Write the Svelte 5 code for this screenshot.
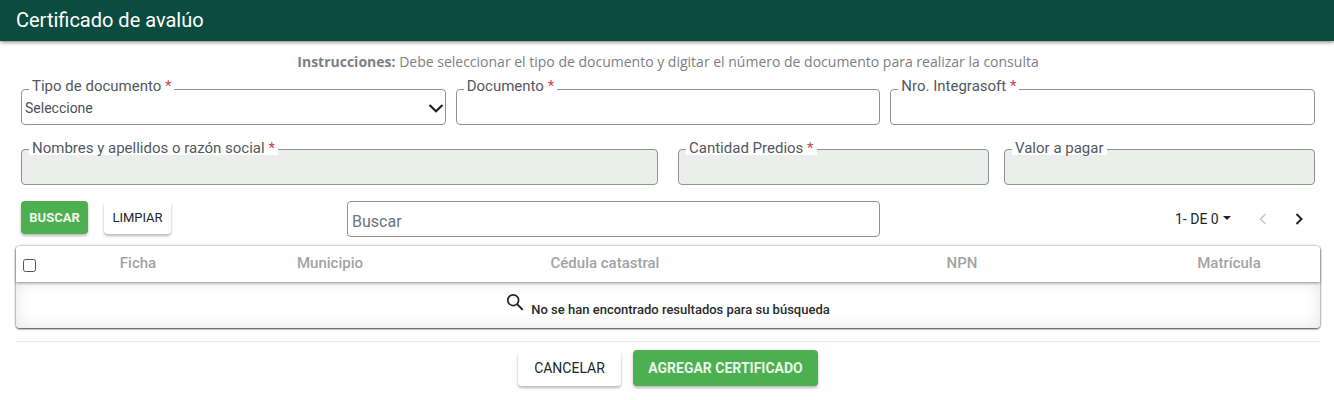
<script lang="ts">
  const topFields = [
    { label: 'Documento', required: true },
    { label: 'Nro. Integrasoft', required: true }
  ];
  const lockedFields = [
    { label: 'Nombres y apellidos o razón social', required: true, cls: 'wide' },
    { label: 'Cantidad Predios', required: true, cls: 'mid' },
    { label: 'Valor a pagar', required: false, cls: 'last' }
  ];
  const columns = [
    { label: 'Ficha', width: 196 },
    { label: 'Municipio', width: 188 },
    { label: 'Cédula catastral', width: 362 },
    { label: 'NPN', width: 352 },
    { label: 'Matrícula', width: 182 }
  ];
</script>

<div class="page">
  <header class="topbar">Certificado de avalúo</header>

  <p class="hint"><b>Instrucciones:</b> Debe seleccionar el tipo de documento y digitar el número de documento para realizar la consulta</p>

  <div class="form-row first">
    <div class="field">
      <span class="label">Tipo de documento <i>*</i></span>
      <div class="box select">
        <span>Seleccione</span>
        <svg width="18" height="18" viewBox="0 0 18 18"><path d="M2.5 6 L9 12.2 L15.5 6" fill="none" stroke="#222" stroke-width="2.2"/></svg>
      </div>
    </div>
    {#each topFields as f}
      <div class="field">
        <span class="label">{f.label} {#if f.required}<i>*</i>{/if}</span>
        <div class="box"></div>
      </div>
    {/each}
  </div>

  <div class="form-row second">
    {#each lockedFields as f}
      <div class="field {f.cls}">
        <span class="label filled">{f.label}{#if f.required}&nbsp;<i>*</i>{/if}</span>
        <div class="box locked"></div>
      </div>
    {/each}
  </div>

  <div class="toolbar">
    <button class="btn green small">BUSCAR</button>
    <button class="btn white small limpiar">LIMPIAR</button>
    <div class="search">Buscar</div>
    <div class="pager">
      <span class="range">1- DE 0</span>
      <span class="caret"></span>
      <svg class="prev" width="12" height="14" viewBox="0 0 12 14"><path d="M8.5 2 L3.5 7 L8.5 12" fill="none" stroke="#c9c9c9" stroke-width="1.6"/></svg>
      <svg class="next" width="12" height="14" viewBox="0 0 12 14"><path d="M3.5 2 L8.5 7 L3.5 12" fill="none" stroke="#222" stroke-width="2"/></svg>
    </div>
  </div>

  <div class="table">
    <div class="thead">
      <span class="check"></span>
      {#each columns as c}
        <span class="th" style="width: {c.width}px">{c.label}</span>
      {/each}
    </div>
    <div class="empty">
      <svg width="18" height="18" viewBox="0 0 20 20"><circle cx="8" cy="8" r="6" fill="none" stroke="#222" stroke-width="1.9"/><path d="M12.3 12.3 L18.7 18.7" stroke="#222" stroke-width="2.1"/></svg>
      <span>No se han encontrado resultados para su búsqueda</span>
    </div>
  </div>

  <div class="actions">
    <button class="btn white big">CANCELAR</button>
    <button class="btn green big">AGREGAR CERTIFICADO</button>
  </div>
</div>

<style>
  :global(body) {
    margin: 0;
    background: #fff;
  }

  .page {
    width: 1334px;
    height: 400px;
    overflow: hidden;
    font-family: Roboto, sans-serif;
    color: #212529;
  }

  .topbar {
    height: 41px;
    padding-left: 16px;
    box-sizing: border-box;
    line-height: 41px;
    background: #0b4c41;
    color: #fff;
    font-size: 20px;
    box-shadow: 0 1px 4px rgba(0, 0, 0, 0.55);
  }

  .hint {
    margin: 12px 0 0;
    padding-left: 2px;
    height: 17px;
    line-height: 17px;
    text-align: center;
    font-family: "Open Sans", sans-serif;
    font-size: 14px;
    color: #7d8083;
  }

  .hint b {
    font-weight: 700;
  }

  .form-row {
    display: flex;
    margin-left: 21px;
    width: 1294px;
  }

  .first {
    margin-top: 19px;
    gap: 10px;
  }

  .first .field {
    flex: 1;
  }

  .second {
    margin-top: 24px;
    gap: 20px;
  }

  .wide {
    width: 637px;
  }

  .mid {
    width: 311px;
  }

  .last {
    width: 311px;
    margin-left: -5px;
  }

  .field {
    position: relative;
  }

  .box {
    height: 36px;
    box-sizing: border-box;
    border: 1px solid #8d9194;
    border-radius: 4px;
    background: #fff;
  }

  .locked {
    background: #eceeec;
  }

  .select {
    display: flex;
    align-items: center;
    justify-content: space-between;
    padding: 2px 0 0 3px;
    font-size: 14px;
    color: #495057;
  }

  .label {
    position: absolute;
    left: 8px;
    top: -10px;
    height: 14px;
    padding: 0 3px;
    line-height: 14px;
    font-size: 15px;
    color: #52585e;
    background: #fff;
    white-space: nowrap;
  }

  .label.filled {
    top: -8px;
  }

  .label i {
    font-style: normal;
    color: #d0404e;
  }

  .toolbar {
    display: flex;
    align-items: flex-start;
    margin: 16px 14px 0 21px;
    height: 45px;
  }

  .btn {
    border: none;
    border-radius: 4px;
    font-family: Roboto, sans-serif;
    box-shadow: 0 2px 3px rgba(0, 0, 0, 0.28);
    padding: 0;
  }

  .small {
    width: 67px;
    height: 33px;
    font-size: 13px;
  }

  .green {
    background: #4caf50;
    color: #fff;
    font-weight: 700;
  }

  .green.small {
    color: #eef7ee;
  }

  .white {
    background: #fff;
    color: #212529;
  }

  .limpiar {
    margin-left: 16px;
  }

  .search {
    margin-left: 176px;
    width: 533px;
    height: 36px;
    box-sizing: border-box;
    border: 1px solid #8d9194;
    border-radius: 4px;
    padding-left: 4px;
    line-height: 39px;
    font-size: 16px;
    color: #6c757d;
  }

  .pager {
    display: flex;
    align-items: center;
    height: 36px;
    margin-left: 295px;
    font-size: 14px;
    color: #212529;
  }

  .caret {
    margin-left: 4px;
    margin-bottom: 3px;
    border-left: 4px solid transparent;
    border-right: 4px solid transparent;
    border-top: 4px solid #222;
  }

  .prev {
    margin-left: 26px;
  }

  .next {
    margin-left: 24px;
  }

  .table {
    margin: 0 14px 0 16px;
    border-radius: 4px;
    box-shadow: 0 1px 2px rgba(0, 0, 0, 0.7), 0 0 3px rgba(0, 0, 0, 0.25);
  }

  .thead {
    display: flex;
    align-items: center;
    height: 36px;
    background: #fff;
    border-radius: 4px 4px 0 0;
    box-shadow: 0 1px 3px rgba(0, 0, 0, 0.4);
    position: relative;
  }

  .check {
    flex: none;
    width: 11px;
    height: 11px;
    margin: 3px 4px 0 7px;
    border: 1px solid #555;
    border-radius: 2.5px;
  }

  .th {
    flex: none;
    margin-bottom: 2px;
    text-align: center;
    font-weight: 500;
    color: #a3a3a3;
    font-size: 15px;
  }

  .empty {
    display: flex;
    justify-content: center;
    align-items: flex-end;
    gap: 7px;
    height: 46px;
    box-sizing: border-box;
    padding-bottom: 11px;
    font-size: 13px;
    font-weight: 500;
    color: #2b2b2b;
    border-radius: 0 0 4px 4px;
    background: #fff;
    box-shadow: inset 0 0 16px rgba(0, 0, 0, 0.11);
  }

  .empty span {
    line-height: 14px;
  }

  .empty svg {
    margin-bottom: 6px;
  }

  .actions {
    display: flex;
    justify-content: center;
    gap: 12px;
    margin: 13px 14px 0 16px;
    padding-top: 8px;
    border-top: 1px solid #e6e6e6;
  }

  .big {
    height: 36px;
    font-size: 14px;
  }

  .white.big {
    width: 103px;
  }

  .green.big {
    width: 185px;
    color: #e9f5e9;
  }
</style>
